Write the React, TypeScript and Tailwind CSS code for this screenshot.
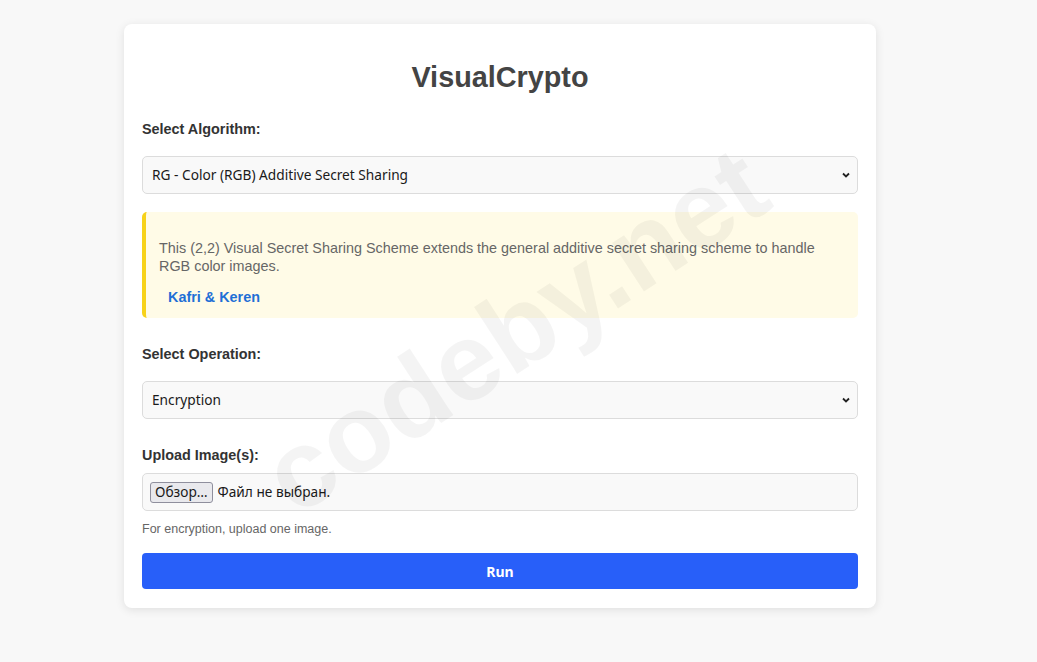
import { FC } from "react";

const Chevron: FC = () => (
  <svg
    width="10"
    height="10"
    viewBox="0 0 10 10"
    className="absolute right-[6px] top-1/2 -translate-y-1/2 pointer-events-none"
  >
    <path d="M2 3.5 L5 6.5 L8 3.5" fill="none" stroke="#222" strokeWidth="1.8" />
  </svg>
);

const FakeSelect: FC<{ value: string }> = ({ value }) => (
  <div className="relative h-[38px] w-full rounded-[5px] border border-[#dcdcdc] bg-[#f9f9f9] flex items-center pl-[9px] text-[13.7px] text-[#1a1a1a] font-['Noto_Sans',sans-serif]">
    {value}
    <Chevron />
  </div>
);

const Label: FC<{ children: string }> = ({ children }) => (
  <div className="text-[14.4px] leading-[17px] font-bold text-[#333]">
    {children}
  </div>
);

export default function App() {
  return (
    <div className="relative min-h-screen bg-[#f8f8f8] pt-6 pl-[124px] font-['Liberation_Sans',Arial,sans-serif] overflow-hidden">
      <div className="w-[752px] h-[584px] bg-white rounded-lg shadow-[0_2px_10px_rgba(0,0,0,0.1)] px-[18px] pt-[36px]">
        <h1 className="text-center text-[28.8px] leading-[34px] font-bold text-[#444]">
          VisualCrypto
        </h1>

        <div className="mt-[27px]">
          <Label>Select Algorithm:</Label>
        </div>
        <div className="mt-[18px]">
          <FakeSelect value="RG - Color (RGB) Additive Secret Sharing" />
        </div>

        <div className="mt-[18px] h-[106px] rounded-[5px] border-l-4 border-[#f7d21a] bg-[#fffbe7] pl-[13px] pr-[15px] pt-[27px]">
          <p className="text-[14.4px] leading-[18px] text-[#666]">
            This (2,2) Visual Secret Sharing Scheme extends the general additive
            secret sharing scheme to handle RGB color images.
          </p>
          <div className="mt-[14px] ml-[9px] text-[14.4px] leading-[17px] font-bold text-[#1f6fd6]">
            Kafri &amp; Keren
          </div>
        </div>

        <div className="mt-[28px]">
          <Label>Select Operation:</Label>
        </div>
        <div className="mt-[18px]">
          <FakeSelect value="Encryption" />
        </div>

        <div className="mt-[28px]">
          <Label>Upload Image(s):</Label>
        </div>
        <div className="mt-[9px] h-[38px] w-full rounded-[5px] border border-[#dcdcdc] bg-[#f9f9f9] flex items-center pl-[7px] gap-[5px] text-[13.7px] text-[#1a1a1a] font-['Noto_Sans',sans-serif]">
          <span className="h-[21px] px-[4px] flex items-center rounded-[3px] border border-[#8f8f9d] bg-[#e9e9ed]">
            Обзор…
          </span>
          <span>Файл не выбран.</span>
        </div>

        <div className="mt-[11px] text-[12.5px] leading-[14px] text-[#666]">
          For encryption, upload one image.
        </div>

        <button className="mt-[17px] h-[36px] w-full rounded-[4px] bg-[#285ff9] text-white text-[14px] font-bold font-['Noto_Sans',sans-serif]">
          Run
        </button>
      </div>

      <div className="pointer-events-none absolute left-[515px] top-[330px] -translate-x-1/2 -translate-y-1/2 -rotate-[33deg] text-[110px] leading-none font-bold text-black/[0.045] whitespace-nowrap">
        codeby.net
      </div>
    </div>
  );
}
